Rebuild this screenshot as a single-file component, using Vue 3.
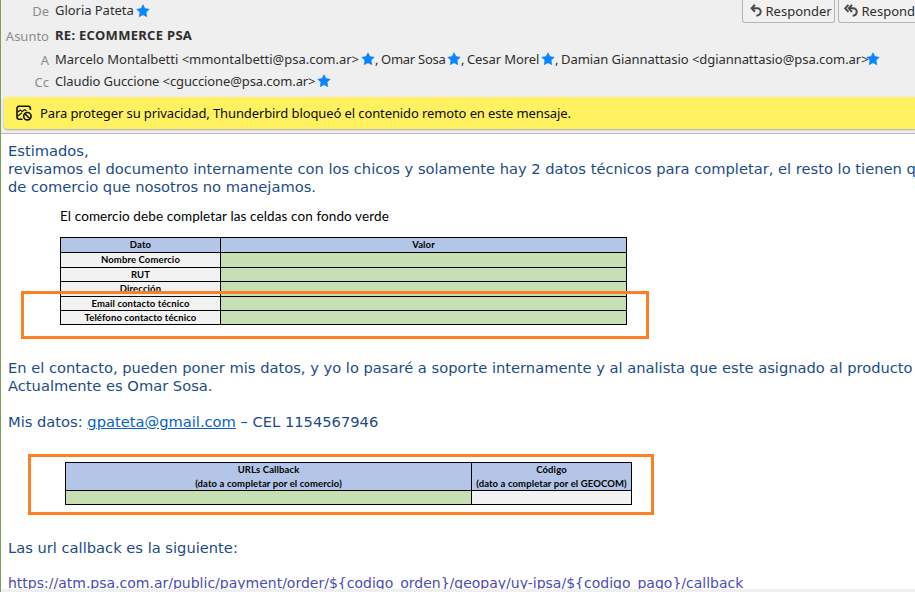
<script setup>
const recipients = [
  { text: 'Marcelo Montalbetti <mmontalbetti@psa.com.ar>', width: 304 },
  { text: 'Omar Sosa', width: 64 },
  { text: 'Cesar Morel', width: 72 },
  { text: 'Damian Giannattasio <dgiannattasio@psa.com.ar>', width: 303 },
]
const rows = [
  { label: 'Nombre Comercio' },
  { label: 'RUT' },
  { label: 'Dirección' },
  { label: 'Email contacto técnico' },
  { label: 'Teléfono contacto técnico' },
]
const star = 'M7 .7 8.9 4.6 13.2 5.2 10.1 8.3 10.8 12.7 7 10.7 3.2 12.7 3.9 8.3 .8 5.2 5.1 4.6Z'
const url = 'https://atm.psa.com.ar/public/payment/order/${codigo_orden}/geopay/uy-ipsa/${codigo_pago}/callback'
</script>

<template>
  <div class="window">
    <header class="headers">
      <div class="row from">
        <span class="label">De</span>
        <span class="value from-name">Gloria Pateta</span>
        <svg class="star" viewBox="0 0 14 14"><path :d="star" /></svg>
        <div class="actions">
          <button class="btn">
            <svg class="reply" viewBox="0 0 12 13"><path d="M5 .8 1.6 4.3 5 7.8M2 4.3h5.2c4.8 0 4.8 6.8-.9 7.4" /></svg>
            <span class="btn-text">Responder</span>
          </button>
          <button class="btn all">
            <svg class="reply wide" viewBox="0 0 14 13"><path d="M4.4 .8 1.2 4.3 4.4 7.8M8 .8 4.8 4.3 8 7.8M5 4.3h4c5 0 5 6.8-.3 7.4" /></svg>
            <span class="btn-text">Responder a todos</span>
          </button>
        </div>
      </div>
      <div class="row subject">
        <span class="label">Asunto</span>
        <strong class="value subject-text">RE: ECOMMERCE PSA</strong>
      </div>
      <div class="row to">
        <span class="label">A</span>
        <span v-for="(r, i) in recipients" :key="r.text" class="recipient">
          <span class="value" :class="'to-' + i" :style="{ width: r.width + 'px' }">{{ r.text }}</span>
          <svg class="star" viewBox="0 0 14 14"><path :d="star" /></svg>
          <span v-if="i < recipients.length - 1" class="comma">,</span>
        </span>
      </div>
      <div class="row cc">
        <span class="label">Cc</span>
        <span class="value cc-text">Claudio Guccione &lt;cguccione@psa.com.ar&gt;</span>
        <svg class="star" viewBox="0 0 14 14"><path :d="star" /></svg>
      </div>
      <div class="notice">
        <svg class="blocked" viewBox="0 0 16 16">
          <path d="M6.5 14.2H3.2C1.8 14.2 1 13.5 1 12.1V3.5C1 2 1.8 1.2 3.2 1.2h9C13.6 1.2 14.4 2 14.4 3.5V5" />
          <path class="thin" d="M1.5 7.3 4.2 5l2 1.6L8.6 4.8l2 1.2M1.5 11.2 6 7.8" />
          <circle cx="11.4" cy="11.2" r="3.7" /><path d="m8.9 8.7 5 5" />
        </svg>
        <span class="notice-text">Para proteger su privacidad, Thunderbird bloqueó el contenido remoto en este mensaje.</span>
      </div>
    </header>

    <main class="message">
      <p>Estimados,</p>
      <p>revisamos el documento internamente con los chicos y solamente hay 2 datos técnicos para completar, el resto lo tienen que</p>
      <p>de comercio que nosotros no manejamos.</p>

      <section class="figure first">
        <div class="caption"><span>El comercio debe completar las celdas con fondo verde</span></div>
        <div class="sheet data">
          <div class="cell head raised">Dato</div>
          <div class="cell head raised">Valor</div>
          <template v-for="(r, i) in rows" :key="r.label">
            <div class="cell gray" :class="{ raised: i === 0 || i === 2 }">{{ r.label }}</div>
            <div class="cell green"></div>
          </template>
        </div>
        <div class="mark mark-contact"></div>
      </section>

      <p>En el contacto, pueden poner mis datos, y yo lo pasaré a soporte internamente y al analista que este asignado al producto</p>
      <p>Actualmente es Omar Sosa.</p>
      <p class="after-gap">Mis datos: <a class="mail">gpateta@gmail.com</a> – CEL 1154567946</p>

      <section class="figure second">
        <div class="sheet urls">
          <div class="cell head double"><span>URLs Callback</span><span>(dato a completar por el comercio)</span></div>
          <div class="cell head double"><span>Código</span><span>(dato a completar por el GEOCOM)</span></div>
          <div class="cell green"></div>
          <div class="cell gray"></div>
        </div>
        <div class="mark mark-urls"></div>
      </section>

      <p>Las url callback es la siguiente:</p>
      <p class="link">{{ url }}</p>
    </main>
    <footer class="status"></footer>
  </div>
</template>

<style>
body { margin: 0; overflow: hidden; }
</style>

<style scoped>
.window {
  box-sizing: border-box;
  display: flex;
  flex-direction: column;
  width: 915px;
  height: 592px;
  overflow: hidden;
  border-left: 1px solid #7a9f55;
  background: #efefef;
}
.headers {
  box-sizing: border-box;
  height: 134px;
  flex: none;
  border-bottom: 1px solid #b8b8b8;
  font-family: "Noto Sans", sans-serif;
  font-size: 13px;
  color: #2e2e2e;
}
.row { display: flex; align-items: center; height: 22px; white-space: nowrap; }
.from { height: 24px; align-items: flex-start; line-height: 22px; }
.from .value { line-height: 21px; }
.subject { height: 24px; }
.subject .value { height: 20px; line-height: 18px; }
.label { width: 48px; margin-right: 6px; flex: none; text-align: right; color: #8c8c8c; }
.to .label, .cc .label { padding-top: 2px; }
.value { flex: none; }
.recipient { display: flex; align-items: center; }
.star { width: 14px; height: 14px; margin-left: 2px; flex: none; fill: #0a84ff; stroke: #0a84ff; stroke-width: .6; stroke-linejoin: round; }
.from .star { margin-top: 4px; }
.comma { width: 6px; }
.from-name { width: 79px; letter-spacing: -.04px; }
.subject-text { letter-spacing: .3px; }
.to-0 { letter-spacing: -.01px; }
.to-3 { letter-spacing: -.055px; }
.to-1 { letter-spacing: -.25px; }
.to-2 { letter-spacing: -.1px; }
.cc-text { width: 260px; letter-spacing: -.11px; }
.notice-text { letter-spacing: -.106px; }
.actions { display: flex; gap: 3px; margin-left: auto; width: 173px; }
.btn {
  box-sizing: border-box;
  display: flex;
  align-items: center;
  flex: none;
  width: 93px;
  height: 24px;
  margin-top: -1px;
  padding: 0 0 0 7px;
  border: 1px solid #b4b4b4;
  border-top: 0;
  border-radius: 0 0 3px 3px;
  background: #f1f1f1;
  color: #2e2e2e;
  font: 13px "Noto Sans", sans-serif;
}
.all { width: 130px; padding-left: 5px; }
.reply { width: 12px; height: 13px; margin-right: 3.5px; flex: none; fill: none; stroke: #4a4a4a; stroke-width: 2; }
.wide { width: 14px; }
.notice {
  display: flex;
  align-items: center;
  height: 32px;
  margin: 5px 0 0 3px;
  padding-left: 12px;
  border-radius: 4px 0 0 4px;
  background: #fff160;
  box-shadow: 0 1px 2px rgba(0, 0, 0, .3);
  color: #0c0c0c;
  white-space: nowrap;
}
.blocked { width: 16px; height: 16px; margin-right: 8px; fill: none; stroke: #15150a; stroke-width: 1.6; }
.thin { stroke-width: 1.2; }
.message {
  box-sizing: border-box;
  height: 455px;
  flex: none;
  overflow: hidden;
  padding: 8px 0 0 7px;
  background: #fff;
  font-family: "DejaVu Sans", sans-serif;
  font-size: 14.667px;
  letter-spacing: .008px;
  line-height: 18px;
  color: #1d4b86;
}
p { height: 18px; margin: 0; white-space: nowrap; }
.after-gap { margin-top: 18px; }
.mail { color: #0563c1; text-decoration: underline; }
.link { margin-top: 17px; color: #4d4bb3; font-size: 14px; letter-spacing: 0; }
.figure { position: relative; box-sizing: border-box; font-family: Lato, sans-serif; color: #000; }
.first { height: 163px; padding: 11px 0 0 52px; }
.second { height: 108px; padding: 31px 0 0 57px; }
.caption { height: 30px; font-size: 13.5px; letter-spacing: .11px; white-space: nowrap; }
.sheet { display: grid; gap: 1px; box-sizing: border-box; width: 567px; padding: 1px; background: #000; font-size: 9.5px; letter-spacing: .11px; font-weight: 700; line-height: 13px; }
.data { grid-template-columns: 159px 405px; grid-template-rows: 14px 14px 13px 14px 13px 13px; }
.urls { grid-template-columns: 405px 159px; grid-template-rows: 27px 13px; }
.cell { display: flex; align-items: center; justify-content: center; white-space: nowrap; overflow: hidden; }
.double { flex-direction: column; line-height: 14px; }
.raised { padding-bottom: 1px; }
.head { background: #b4c6e7; }
.gray { background: #f2f2f2; }
.green { background: #c6e0b4; }
.data .cell { min-height: 0; box-sizing: border-box; }
.mark { position: absolute; box-sizing: border-box; border: 3px solid #ff7f27; }
.mark-contact { left: 13px; top: 95px; width: 628px; height: 48px; }
.mark-urls { left: 20px; top: 23px; width: 626px; height: 61px; }
.status { height: 3px; background: #efefef; }
</style>
